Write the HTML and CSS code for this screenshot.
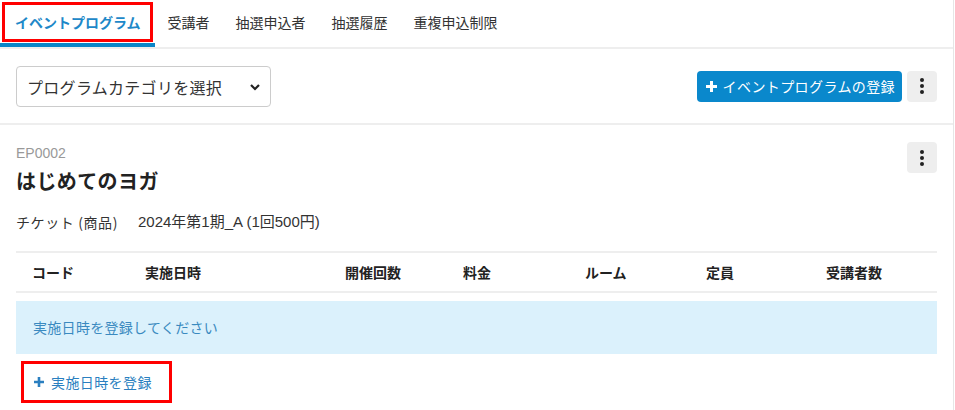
FILE: index.html
```html
<!DOCTYPE html>
<html lang="ja">
<head>
  <meta charset="UTF-8">
  <meta name="viewport" content="width=device-width, initial-scale=1.0">
  <title>イベントプログラム</title>
  <link rel="stylesheet" href="styles.css">
</head>
<body>
  <div class="page">
    <nav class="tabs">
      <a class="tab active marked" href="#">イベントプログラム</a>
      <a class="tab" href="#">受講者</a>
      <a class="tab" href="#">抽選申込者</a>
      <a class="tab" href="#">抽選履歴</a>
      <a class="tab" href="#">重複申込制限</a>
    </nav>

    <div class="toolbar">
      <div class="select">
        <span>プログラムカテゴリを選択</span>
        <svg width="12" height="12" viewBox="0 0 12 12"><path d="M2 4l4 4 4-4" fill="none" stroke="#222" stroke-width="2.2"/></svg>
      </div>
      <div class="actions">
        <button class="btn-primary">
          <svg width="13" height="13" viewBox="0 0 13 13"><path d="M6.5 1v11M1 6.5h11" stroke="#fff" stroke-width="3"/></svg>
          イベントプログラムの登録
        </button>
        <button class="btn-kebab"><span></span><span></span><span></span></button>
      </div>
    </div>

    <section class="card">
      <div class="card-head">
        <div>
          <div class="code">EP0002</div>
          <h2 class="title">はじめてのヨガ</h2>
        </div>
        <button class="btn-kebab"><span></span><span></span><span></span></button>
      </div>
      <p class="info"><span>チケット (商品)</span><span>2024年第1期_A (1回500円)</span></p>

      <div class="table">
        <div class="th">コード</div>
        <div class="th">実施日時</div>
        <div class="th">開催回数</div>
        <div class="th">料金</div>
        <div class="th">ルーム</div>
        <div class="th">定員</div>
        <div class="th">受講者数</div>
      </div>

      <div class="alert">実施日時を登録してください</div>

      <a class="add-link marked" href="#">
        <svg width="12" height="12" viewBox="0 0 12 12"><path d="M6 1v10M1 6h10" stroke="#2a7fc0" stroke-width="2.6"/></svg>
        実施日時を登録
      </a>
    </section>
  </div>
</body>
</html>
```

FILE: styles.css
```css
body {
  margin: 0;
  font-family: "Noto Sans CJK JP", "Liberation Sans", sans-serif;
  font-size: 14px;
  color: #333333;
  background-color: #ffffff;
}
.page {
  width: 954px;
  min-height: 410px;
  border-right: 1px solid #e6e6e6;
  box-sizing: border-box;
}
.marked {
  position: relative;
}
.marked::after {
  content: '';
  position: absolute;
  border: 3px solid #ff0000;
  pointer-events: none;
}
/* Tabs */
.tabs {
  display: flex;
  height: 47px;
  border-bottom: 2px solid #eeeeee;
}
.tab {
  display: flex;
  align-items: center;
  padding: 0 13px;
  color: #333333;
  text-decoration: none;
  border-bottom: 4px solid transparent;
}
.tab.active {
  padding: 0 14px 0 15px;
  color: #1e88c8;
  font-weight: 700;
  border-bottom-color: #0a86c8;
}
.tab.marked::after {
  left: 2px;
  top: 2px;
  right: 2px;
  bottom: 1px;
}
/* Toolbar */
.toolbar {
  display: flex;
  align-items: center;
  justify-content: space-between;
  height: 74px;
  padding: 0 16px;
  border-bottom: 2px solid #eeeeee;
}
.select {
  display: flex;
  align-items: center;
  justify-content: space-between;
  width: 255px;
  height: 41px;
  padding: 0 9px 0 10px;
  box-sizing: border-box;
  border: 1px solid #cccccc;
  border-radius: 4px;
  font-size: 16px;
  letter-spacing: 0.3px;
  color: #333333;
  margin-top: 1px;
}
.actions {
  display: flex;
  gap: 5px;
}
.btn-primary {
  display: flex;
  align-items: center;
  gap: 5px;
  height: 31px;
  padding: 0 7px 0 8px;
  border: none;
  border-radius: 4px;
  background-color: #0a88cc;
  color: #ffffff;
  font-family: inherit;
  font-size: 14px;
  letter-spacing: 0.4px;
}
.btn-kebab {
  display: flex;
  flex-direction: column;
  align-items: center;
  justify-content: center;
  gap: 2px;
  width: 30px;
  height: 31px;
  padding: 0;
  border: none;
  border-radius: 4px;
  background-color: #eeeeee;
}
.btn-kebab span {
  width: 4px;
  height: 4px;
  border-radius: 50%;
  background-color: #222222;
}
/* Card */
.card {
  padding: 17px 16px 0;
}
.card-head {
  display: flex;
  justify-content: space-between;
  align-items: flex-start;
}
.code {
  margin-top: 1px;
  font-family: "Liberation Sans", Arial, sans-serif;
  line-height: 20px;
  color: #999999;
}
.title {
  margin: 4px 0 0;
  font-size: 20px;
  line-height: 28px;
  letter-spacing: 0.4px;
  color: #222222;
}
.info {
  display: flex;
  gap: 20px;
  margin: 17px 0 0;
  line-height: 20px;
}
.info span:first-child {
  letter-spacing: 0.6px;
}
.info span:last-child {
  font-family: "Liberation Sans", "Noto Sans CJK JP", sans-serif;
  font-size: 15px;
}
.table {
  display: grid;
  grid-template-columns: 113px 200px 118px 122px 121px 120px 128px;
  margin-top: 19px;
  border-top: 2px solid #eeeeee;
  border-bottom: 2px solid #eeeeee;
}
.th {
  height: 38px;
  line-height: 38px;
  padding-left: 16px;
  font-weight: 700;
  color: #222222;
}
.alert {
  margin-top: 8px;
  height: 53px;
  line-height: 53px;
  padding: 0 17px;
  background-color: #dbf1fc;
  color: #3a8ac0;
  letter-spacing: 0.3px;
}
.add-link {
  display: inline-flex;
  align-items: center;
  gap: 6px;
  height: 42px;
  margin: 7px 0 0 5px;
  padding: 0 20px 0 12px;
  color: #2a7fc0;
  text-decoration: none;
  letter-spacing: 0.4px;
}
.add-link.marked::after {
  left: 0;
  top: 0;
  right: 0;
  bottom: 0;
}
```
